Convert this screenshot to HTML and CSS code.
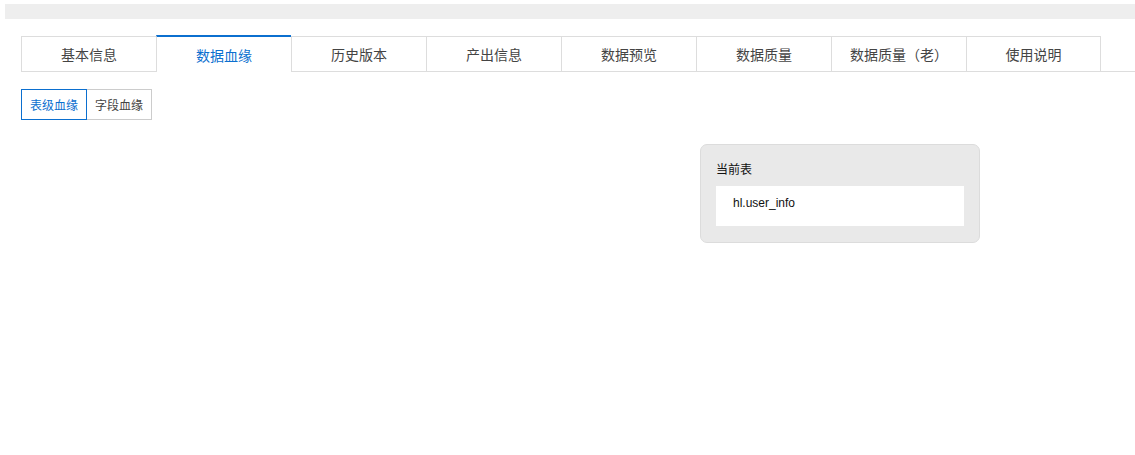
FILE: index.html
```html
<!DOCTYPE html>
<html>
<head>
<meta charset="utf-8">
<title>数据血缘</title>
<link rel="stylesheet" href="styles.css">
</head>
<body>
<div class="topbar"></div>

<div class="tabs">
  <div class="tab">基本信息</div>
  <div class="tab active">数据血缘</div>
  <div class="tab">历史版本</div>
  <div class="tab">产出信息</div>
  <div class="tab">数据预览</div>
  <div class="tab">数据质量</div>
  <div class="tab">数据质量（老）</div>
  <div class="tab last">使用说明</div>
</div>

<div class="subtabs">
  <div class="subtab active">表级血缘</div>
  <div class="subtab">字段血缘</div>
</div>

<div class="canvas">
  <div class="node">
    <div class="node-label">当前表</div>
    <div class="node-table">hl.user_info</div>
  </div>
</div>
</body>
</html>
```

FILE: styles.css
```css
body{margin:0;background:#fff;font-family:"Liberation Sans",Arial,"Noto Sans CJK SC",sans-serif;color:#333;}

.topbar{margin:4px 0 0 5px;height:15px;background:#eeeeee;}

.tabs{display:flex;margin:17px 0 0 21px;border-bottom:1px solid #dddddd;height:35px;}
.tab{box-sizing:border-box;width:135px;height:35px;border-top:1px solid #dddddd;border-left:1px solid #dddddd;display:flex;align-items:center;justify-content:center;font-size:14px;color:#444;}
.tab.last{border-right:1px solid #dddddd;}
.tab.active{border-top:2px solid #0b6fcf;margin-top:-1px;height:37px;background:#fff;color:#0b6fcf;}

.subtabs{display:flex;margin:17px 0 0 21px;}
.subtab{box-sizing:border-box;width:65px;height:31px;border:1px solid #cccccc;display:flex;align-items:center;justify-content:center;font-size:12px;color:#444;}
.subtab + .subtab{border-left:none;}
.subtab.active{width:66px;border-color:#0b6fcf;color:#0b6fcf;}

.canvas{padding:24px 0 0 700px;}
.node{box-sizing:border-box;width:280px;padding:15px 15px 16px;background:#e9e9e9;border:1px solid #dcdcdc;border-radius:7px;}
.node-label{font-size:12px;line-height:20px;color:#111;margin-bottom:6px;}
.node-table{box-sizing:border-box;height:40px;background:#fff;padding:0 0 6px 17px;display:flex;align-items:center;font-size:12px;color:#111;}
```
